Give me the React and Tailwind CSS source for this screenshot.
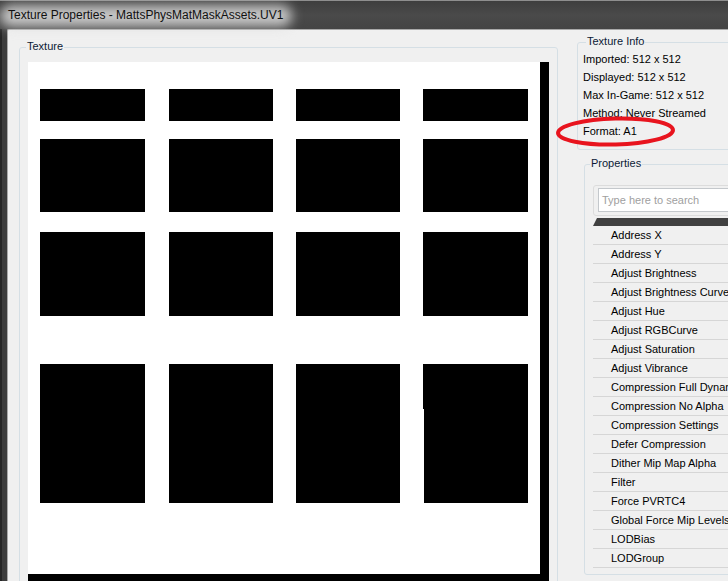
const rows = [
  'Address X',
  'Address Y',
  'Adjust Brightness',
  'Adjust Brightness Curve',
  'Adjust Hue',
  'Adjust RGBCurve',
  'Adjust Saturation',
  'Adjust Vibrance',
  'Compression Full Dynamic Range',
  'Compression No Alpha',
  'Compression Settings',
  'Defer Compression',
  'Dither Mip Map Alpha',
  'Filter',
  'Force PVRTC4',
  'Global Force Mip Levels To Stream',
  'LODBias',
  'LODGroup',
]

const info = [
  'Imported: 512 x 512',
  'Displayed: 512 x 512',
  'Max In-Game: 512 x 512',
  'Method: Never Streamed',
  'Format: A1',
]

// x positions / widths of the four columns, and the row bands
const cols = [
  [12, 105],
  [141, 104],
  [268, 104],
  [395, 105],
]
const bands = [
  [27, 32],
  [77, 73],
  [170, 84],
  [302, 139],
]

function GroupLabel({ children, left }) {
  return (
    <span
      className={`absolute -top-[8px] ${left} px-[1px] bg-[#f0f0f0] text-[#0c1a36] text-[11px] leading-[13px]`}
    >
      {children}
    </span>
  )
}

function TexturePreview() {
  return (
    <svg width="521" height="530" className="block">
      <rect x="0" y="0" width="521" height="530" fill="#000" />
      <rect x="0" y="0" width="512" height="512" fill="#fff" />
      {bands.map(([y, h], r) =>
        cols.map(([x, w], c) =>
          r === 3 && c === 3 ? (
            <g key={`${r}-${c}`}>
              <rect x={x} y={y} width={w} height={45} fill="#000" />
              <rect x={x + 1} y={y + 45} width={w - 1} height={h - 45} fill="#000" />
            </g>
          ) : (
            <rect key={`${r}-${c}`} x={x} y={y} width={w} height={h} fill="#000" />
          )
        )
      )}
    </svg>
  )
}

export default function App() {
  return (
    <div className="relative w-[728px] h-[581px] overflow-hidden flex flex-col bg-[#3c3c3c] font-['Liberation_Sans',Arial,sans-serif]">
      {/* title bar */}
      <div className="relative h-[29px] shrink-0 flex items-center pl-[8px] border-t border-[#8e8e8e] bg-linear-to-b from-[#3e3e3e] via-[#4a4a4a] to-[#444444]">
        <div className="absolute left-0 top-[4px] w-[292px] h-[22px] rounded-[11px] bg-[#dcdcdc]/85 blur-[6px]" />
        <span className="relative text-[12px] text-[#101010] whitespace-nowrap">
          Texture Properties - MattsPhysMatMaskAssets.UV1
        </span>
      </div>

      <div className="flex flex-1 min-h-0">
        {/* window frame */}
        <div className="w-[7px] shrink-0 border-l-2 border-[#262626] bg-[#3d3d3d]" />

        {/* client area */}
        <div className="flex-1 flex bg-[#f0f0f0] border-l border-t border-[#a9a9a9] rounded-tl-[2px] overflow-hidden">
          {/* texture group */}
          <div className="relative shrink-0 ml-[11px] mt-[17px] w-[539px] h-[600px] border border-[#d5dfe5] rounded-[3px] pl-[8px] pt-[14px]">
            <GroupLabel left="left-[6px]">Texture</GroupLabel>
            <TexturePreview />
          </div>

          {/* right column */}
          <div className="shrink-0 ml-[19px] w-[220px] flex flex-col">
            <div className="relative mt-[12px] h-[108px] border border-[#d5dfe5] rounded-[3px] pl-[5px] pt-[7px]">
              <GroupLabel left="left-[8px]">Texture Info</GroupLabel>
              {info.map((line) => (
                <div key={line} className="h-[18px] leading-[18px] text-[11px] text-black whitespace-nowrap">
                  {line}
                </div>
              ))}
            </div>

            <div className="relative ml-[7px] mt-[14px] h-[411px] border border-[#d5dfe5] rounded-[3px] pl-[8px] pt-[20px]">
              <GroupLabel left="left-[5px]">Properties</GroupLabel>

              <div className="h-[31px] border border-[#dcdcdc] rounded-[3px] pl-[4px] pt-[2px]">
                <div className="h-[24px] bg-white border border-[#c4c8cc] pl-[3px] flex items-center text-[11px] text-[#a0a0a0] whitespace-nowrap">
                  Type here to search
                </div>
              </div>

              <div className="mt-[2px] h-[8px] bg-[#404040] [clip-path:polygon(4px_0,100%_0,100%_100%,0_100%)]" />

              {rows.map((name) => (
                <div
                  key={name}
                  className="h-[19px] border-b border-[#d6d6d6] pl-[18px] flex items-center text-[11px] text-black whitespace-nowrap overflow-hidden"
                >
                  {name}
                </div>
              ))}
            </div>
          </div>
        </div>
      </div>

      {/* hand-drawn red highlight around the format line */}
      <svg className="absolute left-[552px] top-[112px]" width="130" height="40">
        <ellipse cx="63.5" cy="19.5" rx="57.5" ry="13" fill="none" stroke="#e8141e" strokeWidth="4" transform="rotate(-1.5 63.5 19.5)" />
      </svg>
    </div>
  )
}
